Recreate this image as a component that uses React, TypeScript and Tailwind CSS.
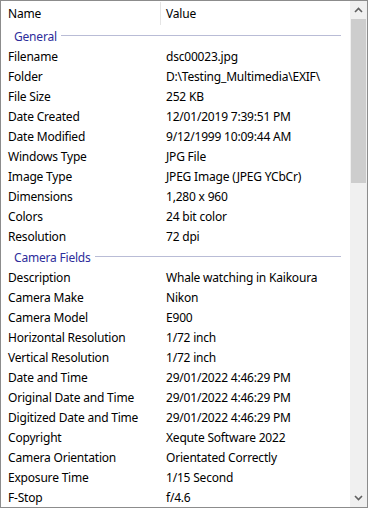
import React from "react";

type Row = [string, string];

const general: Row[] = [
  ["Filename", "dsc00023.jpg"],
  ["Folder", "D:\\Testing_Multimedia\\EXIF\\"],
  ["File Size", "252 KB"],
  ["Date Created", "12/01/2019 7:39:51 PM"],
  ["Date Modified", "9/12/1999 10:09:44 AM"],
  ["Windows Type", "JPG File"],
  ["Image Type", "JPEG Image (JPEG YCbCr)"],
  ["Dimensions", "1,280 x 960"],
  ["Colors", "24 bit color"],
  ["Resolution", "72 dpi"],
];

const camera: Row[] = [
  ["Description", "Whale watching in Kaikoura"],
  ["Camera Make", "Nikon"],
  ["Camera Model", "E900"],
  ["Horizontal Resolution", "1/72 inch"],
  ["Vertical Resolution", "1/72 inch"],
  ["Date and Time", "29/01/2022 4:46:29 PM"],
  ["Original Date and Time", "29/01/2022 4:46:29 PM"],
  ["Digitized Date and Time", "29/01/2022 4:46:29 PM"],
  ["Copyright", "Xequte Software 2022"],
  ["Camera Orientation", "Orientated Correctly"],
  ["Exposure Time", "1/15 Second"],
  ["F-Stop", "f/4.6"],
];

function Group({ title }: { title: string }) {
  return (
    <div className="h-[21px] shrink-0 flex items-center pl-[13px] pr-[9px] pt-px">
      <span className="text-[#2d2d9b]">{title}</span>
      <div className="flex-1 h-px bg-[#b9bcd6] ml-[4px] mb-[3px]" />
    </div>
  );
}

function Item({ row }: { row: Row }) {
  return (
    <div className="h-5 shrink-0 flex items-center text-black">
      <div className="w-[160px] pl-[7px] whitespace-nowrap">{row[0]}</div>
      <div className="pl-[5px] whitespace-nowrap">{row[1]}</div>
    </div>
  );
}

export default function App() {
  return (
    <div
      className="w-[368px] h-[508px] border border-[#8c8c8c] bg-white flex overflow-hidden text-[12px] leading-none tracking-[-0.2px]"
      style={{ fontFamily: '"Noto Sans", "Open Sans", sans-serif' }}
    >
      <div className="flex-1 flex flex-col overflow-hidden">
        <div className="h-[25px] shrink-0 flex items-center text-black">
          <div className="w-[159px] pl-[7px]">Name</div>
          <div className="w-px h-[23px] self-start mt-px bg-[#e5e5e5]" />
          <div className="pl-[5px]">Value</div>
        </div>
        <Group title="General" />
        {general.map((r) => (
          <Item key={r[0]} row={r} />
        ))}
        <Group title="Camera Fields" />
        {camera.map((r) => (
          <Item key={r[0]} row={r} />
        ))}
      </div>
      <div className="w-[17px] shrink-0 bg-[#f0f0f0] flex flex-col items-center">
        <div className="h-[18px] w-full flex items-center justify-center">
          <svg width="9" height="6" viewBox="0 0 9 6">
            <path d="M1 5 L4.5 1.5 L8 5" stroke="#606060" strokeWidth="1.6" fill="none" />
          </svg>
        </div>
        <div className="w-[15px] h-[164px] bg-[#cdcdcd]" />
        <div className="flex-1" />
        <div className="h-[18px] w-full flex items-center justify-center">
          <svg width="9" height="6" viewBox="0 0 9 6">
            <path d="M1 1 L4.5 4.5 L8 1" stroke="#606060" strokeWidth="1.6" fill="none" />
          </svg>
        </div>
      </div>
    </div>
  );
}
